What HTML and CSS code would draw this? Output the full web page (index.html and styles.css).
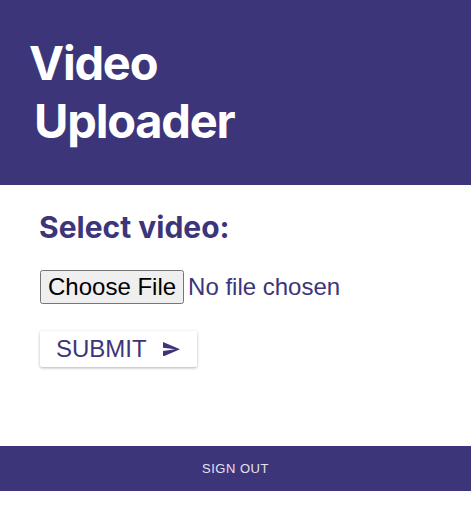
FILE: index.html
```html
<!DOCTYPE html>
<html>
<head>
<meta charset="utf-8">
<link rel="stylesheet" href="styles.css">
</head>
<body>
<header class="hero">
  <h1 class="title">Video<br><span class="indent">Uploader</span></h1>
</header>
<main class="content">
  <h2 class="label">Select video:</h2>
  <input class="file" type="file">
  <button class="submit" type="button">SUBMIT
    <svg class="send" width="17" height="14.6" viewBox="2 3 21 18"><path d="M2.01 21L23 12 2.01 3 2 10l15 2-15 2z" fill="#3d3579"/></svg>
  </button>
</main>
<footer class="bar">
  <button class="signout" type="button">SIGN OUT</button>
</footer>
</body>
</html>
```

FILE: styles.css
```css
html, body {
  margin: 0;
  padding: 0;
  background: #ffffff;
}
.hero {
  height: 185px;
  box-sizing: border-box;
  background: #3d3579;
  padding: 34px 0 0 29px;
}
.title {
  margin: 0;
  font-family: Inter, "Liberation Sans", sans-serif;
  font-weight: 700;
  font-size: 47px;
  line-height: 58px;
  color: #ffffff;
  letter-spacing: -1.2px;
}
.indent {
  margin-left: 5px;
}
.content {
  height: 261px;
  box-sizing: border-box;
  padding: 25px 0 0 40px;
  display: flex;
  flex-direction: column;
  align-items: flex-start;
}
.label {
  margin: 0 0 25px -1px;
  font-family: Inter, "Liberation Sans", sans-serif;
  font-weight: 700;
  font-size: 30px;
  line-height: 35px;
  color: #3d3579;
}
.file {
  font-family: "Liberation Sans", Arial, sans-serif;
  font-size: 24px;
  color: #3d3579;
  margin: 0;
}
.file::file-selector-button {
  font-family: "Liberation Sans", Arial, sans-serif;
  font-size: 24px;
  color: #000000;
}
.submit {
  margin-top: 27px;
  width: 157px;
  height: 36px;
  box-sizing: border-box;
  padding: 0 17px 0 16px;
  display: flex;
  align-items: center;
  justify-content: space-between;
  background: #ffffff;
  border: none;
  border-radius: 2px;
  box-shadow: 0 1px 3px rgba(0,0,0,0.3);
  font-family: "Liberation Sans", Arial, sans-serif;
  font-size: 24px;
  color: #3d3579;
}
.send {
  display: block;
}
.bar {
  height: 45px;
  background: #3d3579;
  display: flex;
  align-items: center;
  justify-content: center;
}
.signout {
  background: none;
  border: none;
  padding: 0;
  font-family: "Liberation Sans", Arial, sans-serif;
  font-size: 13px;
  letter-spacing: 0.5px;
  color: #e4e2ef;
}
```
